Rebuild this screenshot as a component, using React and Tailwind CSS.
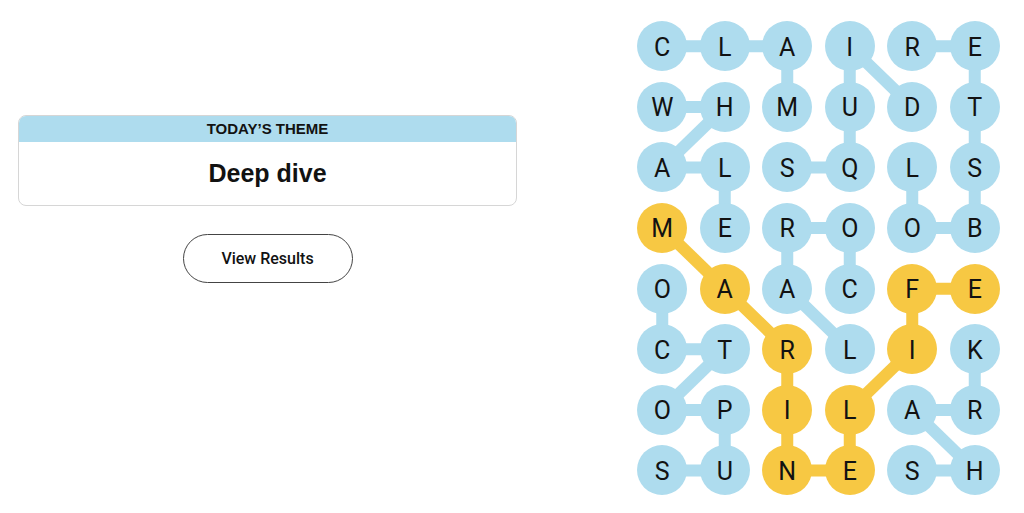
const LETTERS = [
  "CLAIRE",
  "WHMUDT",
  "ALSQLS",
  "MEROOB",
  "OAACFE",
  "CTRLIK",
  "OPILAR",
  "SUNESH",
];

// each word is a list of [row, col] cells, in spelling order
const WORDS = [
  { cells: [[0, 0], [0, 1], [0, 2], [1, 2]] },
  { cells: [[1, 0], [1, 1], [2, 0], [2, 1], [3, 1]] },
  { cells: [[2, 2], [2, 3], [1, 3], [0, 3], [1, 4]] },
  { cells: [[2, 4], [3, 4], [3, 5], [2, 5], [1, 5], [0, 5], [0, 4]] },
  { cells: [[4, 3], [3, 3], [3, 2], [4, 2], [5, 3]] },
  { cells: [[4, 0], [5, 0], [5, 1], [6, 0], [6, 1], [7, 1], [7, 0]] },
  { cells: [[7, 4], [7, 5], [6, 4], [6, 5], [5, 5]] },
  {
    spangram: true,
    cells: [[3, 0], [4, 1], [5, 2], [6, 2], [7, 2], [7, 3], [6, 3], [5, 4], [4, 4], [4, 5]],
  },
];

const CELL_W = 62.5;
const CELL_H = 60.6;
const BLUE = "#aedcee";
const YELLOW = "#f7c843";

const spanCells = new Set(
  WORDS.filter((w) => w.spangram).flatMap((w) => w.cells.map(([r, c]) => `${r}-${c}`))
);

function Connectors() {
  return (
    <svg
      className="absolute inset-0"
      width={CELL_W * 6}
      height={CELL_H * 8}
      aria-hidden="true"
    >
      {WORDS.map((w, i) =>
        w.cells.slice(1).map(([r, c], j) => {
          const [pr, pc] = w.cells[j];
          return (
            <line
              key={`${i}-${j}`}
              x1={pc * CELL_W + CELL_W / 2}
              y1={pr * CELL_H + CELL_H / 2}
              x2={c * CELL_W + CELL_W / 2}
              y2={r * CELL_H + CELL_H / 2}
              stroke={w.spangram ? YELLOW : BLUE}
              strokeWidth="12"
              strokeLinecap="round"
            />
          );
        })
      )}
    </svg>
  );
}

function Board() {
  return (
    <div className="relative">
      <Connectors />
      <div className="relative grid grid-cols-[repeat(6,62.5px)] grid-rows-[repeat(8,60.6px)]">
        {LETTERS.flatMap((row, r) =>
          row.split("").map((ch, c) => (
            <div key={`${r}-${c}`} className="flex items-center justify-center">
              <span
                className={`flex h-[50px] w-[50px] items-center justify-center rounded-full pt-[2px] text-[25px] font-normal text-[#121212] ${
                  spanCells.has(`${r}-${c}`) ? "bg-[#f7c843]" : "bg-[#aedcee]"
                }`}
              >
                {ch}
              </span>
            </div>
          ))
        )}
      </div>
    </div>
  );
}

export default function App() {
  return (
    <div className="flex h-[513px] w-[1024px] bg-white font-['Roboto','Liberation_Sans',sans-serif] text-[#121212]">
      <div className="ml-[18px] mt-[115px] flex w-[499px] flex-col items-center">
        <div className="w-full overflow-hidden rounded-lg border border-[#d6d6d6]">
          <div className="flex h-[26px] items-center justify-center bg-[#aedcee] font-['Liberation_Sans',sans-serif] text-[15px] font-bold uppercase">
            Today’s Theme
          </div>
          <div className="flex h-[63px] items-center justify-center font-['Liberation_Sans',sans-serif] text-[25px] font-bold">
            Deep dive
          </div>
        </div>
        <button className="mt-[28px] h-[49px] w-[170px] rounded-full border border-[#444] bg-white text-[16px] font-medium">
          View Results
        </button>
      </div>
      <div className="ml-[114px] mt-[16px]">
        <Board />
      </div>
    </div>
  );
}
